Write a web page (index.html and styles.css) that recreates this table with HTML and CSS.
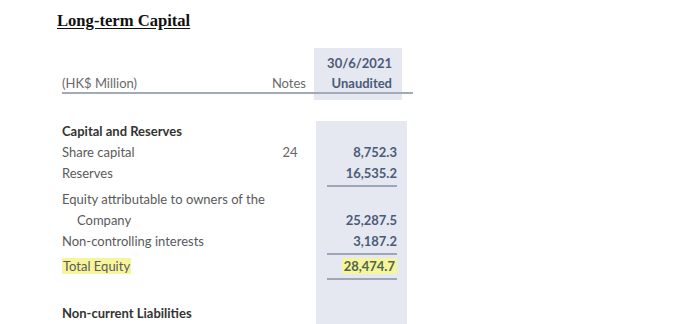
FILE: index.html
```html
<!DOCTYPE html>
<html>
<head>
<meta charset="utf-8">
<link rel="stylesheet" href="styles.css">
</head>
<body>
<div class="page">
  <h1 class="title">Long-term Capital</h1>
  <div class="head">
    <div class="label muted">(HK$ Million)</div>
    <div class="notes-h muted">Notes</div>
    <div class="val-h">30/6/2021<br>Unaudited</div>
  </div>
  <div class="tbody">
    <div class="row">
      <div class="label strong">Capital and Reserves</div>
      <div class="notes"></div>
      <div class="val"></div>
    </div>
    <div class="row">
      <div class="label">Share capital</div>
      <div class="notes">24</div>
      <div class="val"><span class="num">8,752.3</span></div>
    </div>
    <div class="row">
      <div class="label">Reserves</div>
      <div class="notes"></div>
      <div class="val"><span class="num rule">16,535.2</span></div>
    </div>
    <div class="row end sp2">
      <div class="label">Equity attributable to owners of the<br><span class="indent">Company</span></div>
      <div class="notes"></div>
      <div class="val"><span class="num">25,287.5</span></div>
    </div>
    <div class="row">
      <div class="label">Non-controlling interests</div>
      <div class="notes"></div>
      <div class="val"><span class="num rule">3,187.2</span></div>
    </div>
    <div class="row sp1">
      <div class="label"><mark class="hl">Total Equity</mark></div>
      <div class="notes"></div>
      <div class="val"><span class="num rule total"><mark class="hl hl-num">28,474.7</mark></span></div>
    </div>
    <div class="row sp23">
      <div class="label strong">Non-current Liabilities</div>
      <div class="notes"></div>
      <div class="val"></div>
    </div>
  </div>
</div>
</body>
</html>
```
FILE: styles.css
```css
html, body {
  margin: 0;
  padding: 0;
  background: #ffffff;
}
.page {
  width: 700px;
  height: 324px;
  overflow: hidden;
  font-family: Lato, "Noto Sans", sans-serif;
  font-size: 13px;
  color: #5a5a5a;
}
.title {
  margin: 12px 0 0 57px;
  font-family: "Liberation Serif", "Times New Roman", serif;
  font-size: 16.6px;
  line-height: 18px;
  font-weight: bold;
  color: #111111;
  text-decoration: underline;
  text-underline-offset: 2px;
}
.head {
  position: relative;
  display: flex;
  align-items: flex-end;
  width: 351px;
  margin: 18px 0 0 62px;
}
.head::after {
  content: "";
  position: absolute;
  left: 0;
  right: 0;
  bottom: 6px;
  height: 2px;
  background: #a2aaba;
}
.head .label {
  flex: 1;
  line-height: 20px;
  padding-bottom: 7px;
}
.muted {
  color: #6a6a6a;
}
.notes-h {
  line-height: 20px;
  padding-bottom: 7px;
  text-align: right;
}
.val-h {
  width: 78px;
  margin: 0 11px 0 8px;
  padding: 5px 10px 7px 0;
  background: #e5e8f1;
  text-align: right;
  font-weight: bold;
  line-height: 20px;
  color: #4b5b78;
}
.tbody {
  width: 345px;
  margin: 21px 0 0 62px;
}
.row {
  display: flex;
  line-height: 21px;
}
.row.end {
  align-items: stretch;
}
.row .label {
  width: 210px;
}
.row .notes {
  width: 36px;
  text-align: center;
  color: #666666;
}
.row .val {
  width: 81px;
  margin-left: 8px;
  padding-right: 10px;
  background: #e5e8f1;
  text-align: right;
  display: flex;
  flex-direction: column;
  align-items: flex-end;
}
.row.end .val {
  justify-content: flex-end;
}
.sp1 > * { padding-top: 1px; }
.sp2 > * { padding-top: 2px; }
.sp23 > * { padding-top: 23px; }
.strong {
  font-weight: bold;
  color: #333333;
}
.indent {
  padding-left: 15px;
}
.num {
  display: block;
  font-weight: bold;
  color: #4b5b78;
}
.num.rule {
  width: 70px;
  padding-bottom: 1px;
  border-bottom: 2px solid #9ea7b8;
}
.num.total {
  color: #4f6650;
}
.hl {
  background: #f6f59c;
  color: inherit;
  padding: 0 1px;
}
.hl-num {
  padding: 0 2px;
}
```
